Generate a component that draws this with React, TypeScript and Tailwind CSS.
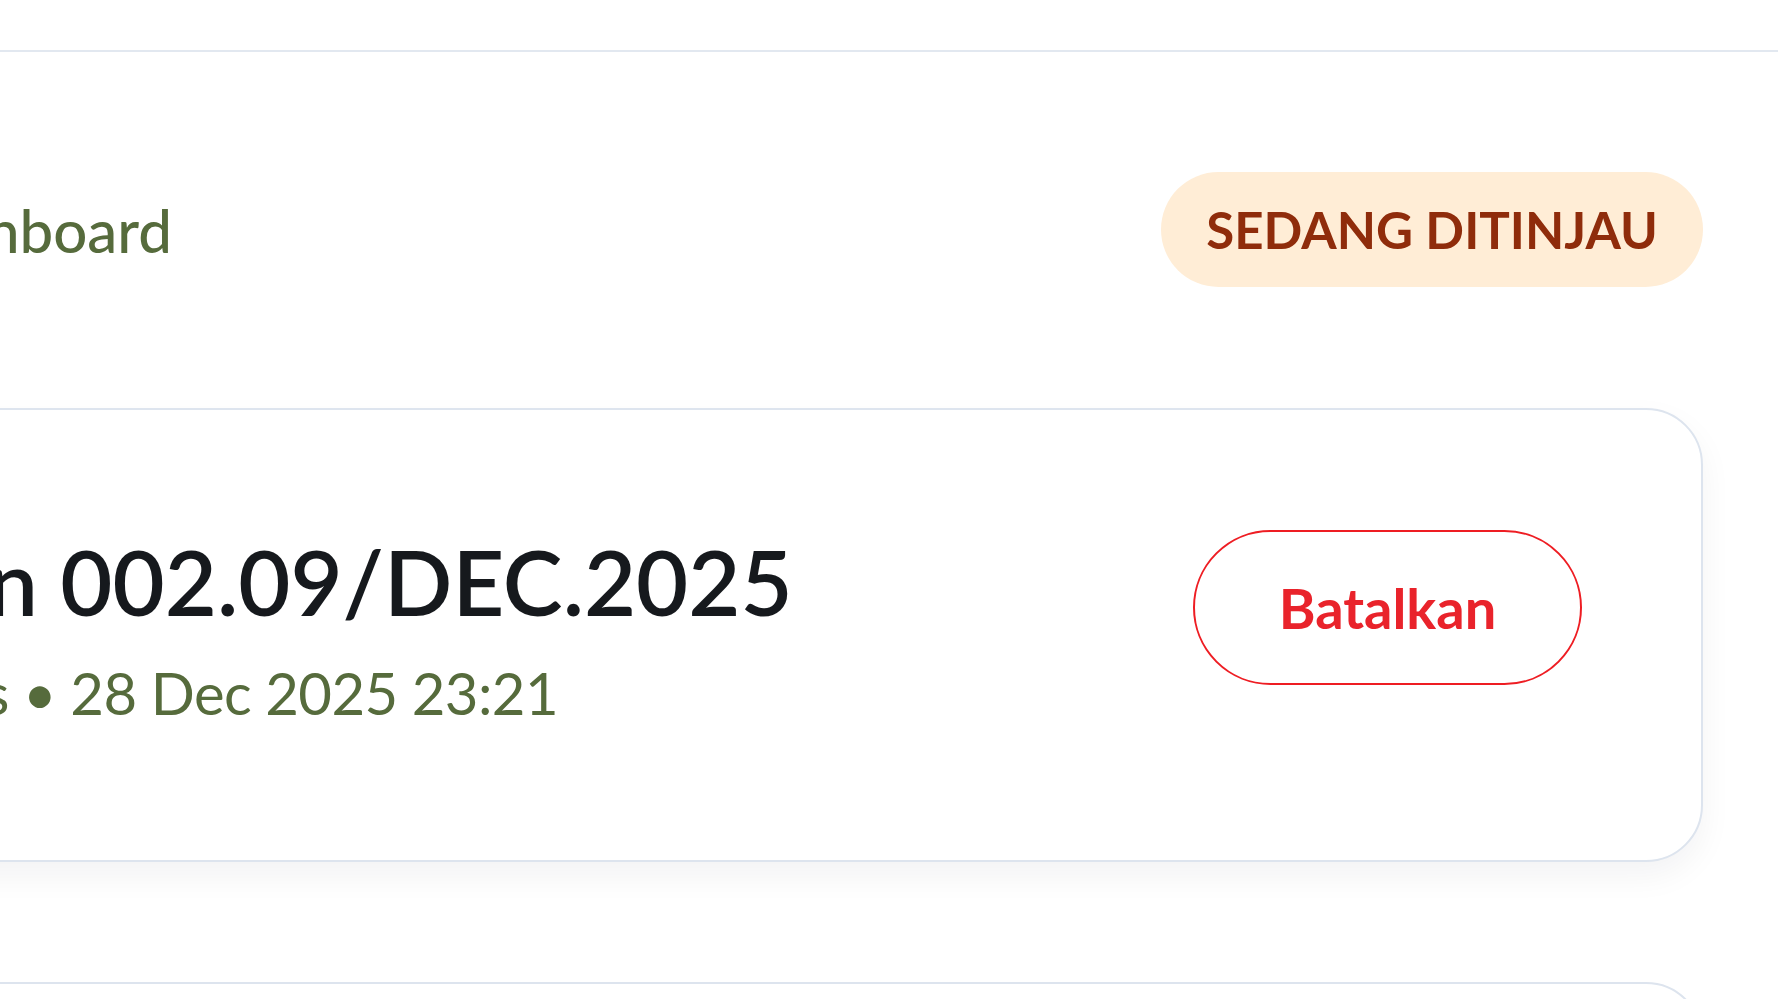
export default function App() {
  return (
    <div className="h-[999px] w-[1778px] overflow-hidden bg-white font-['Lato','Noto_Sans',sans-serif]">
      <header className="h-[52px] border-b-2 border-[#e2e8f0] bg-white" />

      <main className="-ml-[115px] pr-[75px]">
        <div className="mt-[120px] flex items-center justify-between">
          <a className="text-[60px] leading-none font-medium text-[#566b3c]">Dashboard</a>
          <span className="flex h-[115px] items-center rounded-full bg-[#ffedd6] px-[45px] text-[51px] leading-none font-bold text-[#8f2c0b]">
            SEDANG DITINJAU
          </span>
        </div>

        <section className="mt-[121px] -ml-[341px] flex h-[454px] items-start justify-between rounded-[57px] border-2 border-[#dde4ee] bg-white pt-[120px] pr-[119px] pl-[80px] shadow-[0_14px_32px_rgba(15,23,42,0.05)]">
          <div className="pt-[6px]">
            <h1 className="text-[90px] leading-none font-semibold text-[#16191d]">Pengajuan 002.09/DEC.2025</h1>
            <p className="mt-[38px] text-[58px] leading-none tracking-[-0.01em] text-[#566b3c]">Audio &amp; Stands • 28 Dec 2025 23:21</p>
          </div>
          <button className="flex h-[155px] w-[389px] items-center justify-center rounded-full border-2 border-[#ee1d23] text-[56px] leading-none font-bold text-[#e9232b]">
            Batalkan
          </button>
        </section>

        <section className="mt-[120px] -ml-[341px] h-[300px] rounded-[57px] border-2 border-[#dde4ee] bg-white" />
      </main>
    </div>
  );
}
